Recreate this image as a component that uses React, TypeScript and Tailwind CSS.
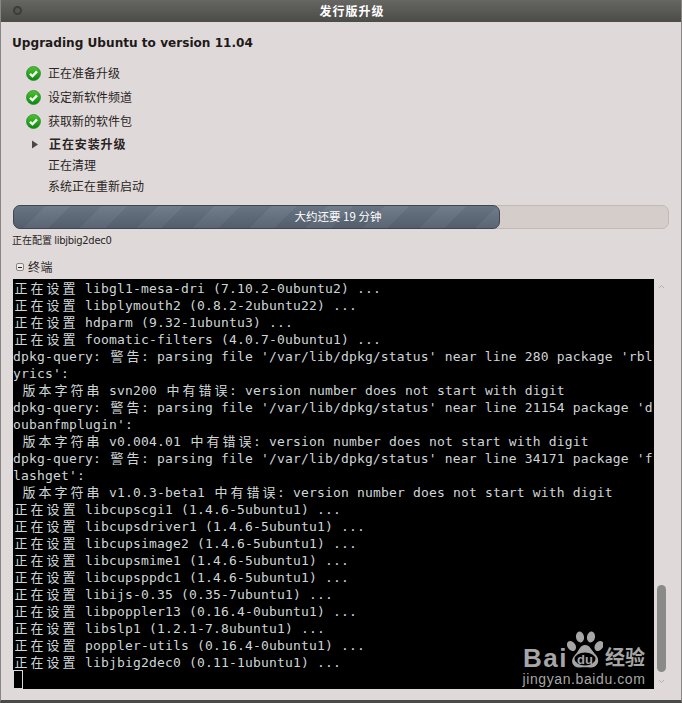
import React from "react";

const lines = [
  "正在设置 libgl1-mesa-dri (7.10.2-0ubuntu2) ...",
  "正在设置 libplymouth2 (0.8.2-2ubuntu22) ...",
  "正在设置 hdparm (9.32-1ubuntu3) ...",
  "正在设置 foomatic-filters (4.0.7-0ubuntu1) ...",
  "dpkg-query: 警告: parsing file '/var/lib/dpkg/status' near line 280 package 'rbl",
  "yrics':",
  " 版本字符串 svn200 中有错误: version number does not start with digit",
  "dpkg-query: 警告: parsing file '/var/lib/dpkg/status' near line 21154 package 'd",
  "oubanfmplugin':",
  " 版本字符串 v0.004.01 中有错误: version number does not start with digit",
  "dpkg-query: 警告: parsing file '/var/lib/dpkg/status' near line 34171 package 'f",
  "lashget':",
  " 版本字符串 v1.0.3-beta1 中有错误: version number does not start with digit",
  "正在设置 libcupscgi1 (1.4.6-5ubuntu1) ...",
  "正在设置 libcupsdriver1 (1.4.6-5ubuntu1) ...",
  "正在设置 libcupsimage2 (1.4.6-5ubuntu1) ...",
  "正在设置 libcupsmime1 (1.4.6-5ubuntu1) ...",
  "正在设置 libcupsppdc1 (1.4.6-5ubuntu1) ...",
  "正在设置 libijs-0.35 (0.35-7ubuntu1) ...",
  "正在设置 libpoppler13 (0.16.4-0ubuntu1) ...",
  "正在设置 libslp1 (1.2.1-7.8ubuntu1) ...",
  "正在设置 poppler-utils (0.16.4-0ubuntu1) ...",
  "正在设置 libjbig2dec0 (0.11-1ubuntu1) ...",
];

function TermLine({ text }: { text: string }) {
  // CJK glyphs take two terminal cells
  const parts = text.split(/([\u4e00-\u9fff])/);
  return (
    <div className="h-[17px] whitespace-pre leading-[19px]">
      {parts.map((p, i) =>
        /[\u4e00-\u9fff]/.test(p) ? (
          <span key={i} className="inline-block w-4 text-center tracking-normal">
            {p}
          </span>
        ) : (
          <span key={i}>{p}</span>
        )
      )}
    </div>
  );
}

function Check() {
  return (
    <svg width="15" height="15" viewBox="0 0 15 15" className="shrink-0">
      <defs>
        <linearGradient id="okfill" x1="0" y1="0" x2="0" y2="1">
          <stop offset="0" stopColor="#4fc32f" />
          <stop offset="1" stopColor="#0a8a12" />
        </linearGradient>
      </defs>
      <circle cx="7.5" cy="7.5" r="7" fill="url(#okfill)" stroke="#17761a" strokeWidth="0.6" />
      <path d="M4 7.8 L6.500 10.200 L11 5.400" fill="none" stroke="#fff" strokeWidth="2.3" />
    </svg>
  );
}

function DoneStep({ label }: { label: string }) {
  return (
    <div className="flex h-6 items-center gap-[7px] pl-[25px]">
      <Check />
      <span>{label}</span>
    </div>
  );
}

function Paw() {
  return (
    <svg width="36" height="39" viewBox="0 0 36 39" className="mx-[-1px] fill-[#a6a6a6]">
      <ellipse cx="13" cy="6" rx="4" ry="5.5" transform="rotate(-10 13 6)" />
      <ellipse cx="24" cy="6" rx="4" ry="5.5" transform="rotate(10 24 6)" />
      <ellipse cx="4.5" cy="15" rx="4" ry="5.5" transform="rotate(-35 4.5 15)" />
      <ellipse cx="32" cy="15" rx="4" ry="5.5" transform="rotate(35 32 15)" />
      <path d="M18 14 C23 14 24 19 29 24 C34 30 30 37 23 36.500 C20 36 16 36 13 36.500 C6 37 2 30 8 24 C12 20 13 14 18 14 Z" />
      <ellipse cx="18" cy="28" rx="10.500" ry="6.500" fill="#000" />
      <text x="18" y="33" textAnchor="middle" fontSize="13" fontWeight="700" fontFamily="Liberation Sans">
        du
      </text>
    </svg>
  );
}

export default function App() {
  return (
    <div className="flex h-[703px] w-[682px] flex-col overflow-hidden border-x border-b-[3px] border-x-[#8a8685] border-b-[#4a4a48] bg-[#dfdad9] font-['Noto_Sans_CJK_SC',sans-serif] text-[12px] text-[#2a2424]">
      {/* title bar */}
      <div className="relative flex h-[22px] shrink-0 items-center justify-center bg-gradient-to-b from-[#666662] to-[#4b4b48] pl-[22px] text-[12px] font-bold tracking-[1px] text-white">
        <span className="absolute left-[12px] top-[6px] h-[9px] w-[9px] rounded-full border-2 border-[#3c3c3a] bg-[#555552]" />
        发行版升级
      </div>

      <div className="flex min-h-0 flex-1 flex-col">
        <h1 className="pl-[11px] pt-[12px] font-['DejaVu_Sans',sans-serif] text-[12.100px] font-bold leading-[18px] text-[#1f1a1a]">
          Upgrading Ubuntu to version 11.04
        </h1>

        <div className="mt-[9px] flex flex-col">
          <DoneStep label="正在准备升级" />
          <DoneStep label="设定新软件频道" />
          <DoneStep label="获取新的软件包" />
          <div className="flex h-[22px] items-center pl-[30px] font-bold tracking-[0.9px]">
            <svg width="8" height="9" viewBox="0 0 8 9" className="mr-[10px] fill-[#4c4644]">
              <path d="M1 0.500 L7 4.500 L1 8.500 Z" />
            </svg>
            正在安装升级
          </div>
          <div className="flex h-[20px] items-center pl-[47px]">正在清理</div>
          <div className="flex h-[21px] items-center pl-[47px]">系统正在重新启动</div>
        </div>

        {/* progress */}
        <div className="relative ml-[12px] mt-[9px] h-6 w-[656px] shrink-0 rounded-[7px] border border-[#c2b8b5] bg-[#d5cdca]">
          <div className="absolute -inset-px right-auto w-[487px] rounded-[7px] border border-[#3f4654] bg-[linear-gradient(to_bottom,rgba(255,255,255,0.05),rgba(0,0,0,0.14)),repeating-linear-gradient(135deg,#616d7d_0px,#616d7d_22px,#6a7686_22px,#6a7686_40px)]" />
          <div className="absolute inset-0 flex items-center justify-center pr-[6px] text-[11.500px] text-white">
            大约还要 19 分钟
          </div>
        </div>

        <div className="pl-[11px] pt-[3px] text-[10px] leading-[15px] text-[#2a2424]">
          <span>正在配置 </span>
          <span className="font-['DejaVu_Sans',sans-serif] tracking-[-0.3px]">libjbig2dec0</span>
        </div>

        <div className="mt-[9px] flex h-[20px] items-center pl-[15px] text-[12px]">
          <span className="mr-[4px] flex h-[8px] w-[8px] items-center justify-center rounded-[2px] border border-[#8a8482] bg-[#efeaea]">
            <span className="h-px w-[4px] bg-[#222]" />
          </span>
          <span className="tracking-[0.5px]">终端</span>
        </div>

        <div className="mt-[2px] flex pl-[12px]">
          <div className="relative h-[410px] w-[641px] shrink-0 overflow-hidden bg-black font-['DejaVu_Sans_Mono','Noto_Sans_CJK_SC',monospace] text-[13px] tracking-[0.17px] text-[#cfd6d8]">
            {lines.map((l, i) => (
              <TermLine key={i} text={l} />
            ))}
            <div className="h-[19px] w-[10px] border border-[#d8d8d8]" />

            {/* watermark */}
            <div className="absolute bottom-[1px] right-[9px] flex w-[122px] flex-col items-center font-['Liberation_Sans',sans-serif] tracking-normal text-[#a6a6a6]">
              <div className="flex h-[41px] items-end">
                <span className="text-[26px] font-bold leading-[24px] tracking-[1.5px]">Bai</span>
                <Paw />
                <span className="ml-[3px] font-['Noto_Sans_CJK_SC',sans-serif] text-[20px] font-bold leading-[26px]">经验</span>
              </div>
              <span className="text-[14px] leading-[18px] tracking-[0.6px]">jingyan.baidu.com</span>
            </div>
          </div>

          {/* scrollbar */}
          <div className="relative ml-[3px] flex w-[9px] flex-col items-center justify-end">
            <svg width="7" height="5" viewBox="0 0 7 5" className="absolute top-[5px] stroke-[#b5afae]">
              <path d="M1 4 L3.500 1.500 L6 4" fill="none" strokeWidth="1" />
            </svg>
            <div className="mb-[17px] h-[87px] w-[9px] rounded-full bg-[#8a8a8a]" />
            <svg width="7" height="5" viewBox="0 0 7 5" className="absolute bottom-[5px] stroke-[#b5afae]">
              <path d="M1 1 L3.500 3.500 L6 1" fill="none" strokeWidth="1" />
            </svg>
          </div>
        </div>
      </div>
    </div>
  );
}
